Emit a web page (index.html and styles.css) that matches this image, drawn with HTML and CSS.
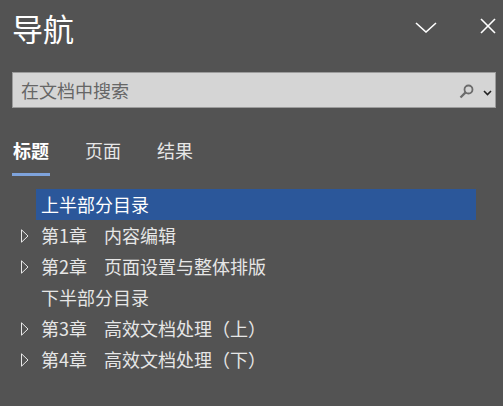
FILE: index.html
```html
<!DOCTYPE html>
<html lang="zh-CN">

<head>
    <meta charset="UTF-8" />
    <title>导航</title>
    <link rel="stylesheet" href="styles.css">
</head>

<body>
    <div class="pane">
        <div class="pane-header">
            <h1 class="pane-title">导航</h1>
            <button class="icon-btn btn-menu" type="button">
                <svg width="22" height="11" viewBox="0 0 22 11">
                    <polyline points="1,1 11,10 21,1" fill="none" stroke="#ffffff" stroke-width="1.6" />
                </svg>
            </button>
            <button class="icon-btn btn-close" type="button">
                <svg width="16" height="16" viewBox="0 0 16 16">
                    <line x1="1" y1="1" x2="15" y2="15" stroke="#ffffff" stroke-width="1.6" />
                    <line x1="15" y1="1" x2="1" y2="15" stroke="#ffffff" stroke-width="1.6" />
                </svg>
            </button>
        </div>

        <div class="search-box">
            <span class="search-text">在文档中搜索</span>
            <svg class="search-icon" width="15" height="15" viewBox="0 0 15 15">
                <circle cx="9.5" cy="5.5" r="4" fill="none" stroke="#6b6b6b" stroke-width="1.8" />
                <line x1="6.6" y1="8.4" x2="1.5" y2="13.5" stroke="#6b6b6b" stroke-width="2.2" />
            </svg>
            <svg class="search-drop" width="9" height="6" viewBox="0 0 9 6">
                <polyline points="1,1 4.5,4.5 8,1" fill="none" stroke="#222222" stroke-width="1.6" />
            </svg>
        </div>

        <div class="tabs">
            <div class="tab active">标题</div>
            <div class="tab">页面</div>
            <div class="tab">结果</div>
        </div>

        <ul class="tree">
            <li class="tree-row">
                <span class="toggle"></span>
                <span class="label selected">上半部分目录</span>
            </li>
            <li class="tree-row">
                <span class="toggle"><svg width="8" height="14" viewBox="0 0 8 14"><polygon points="0.5,0.8 7,7 0.5,13.2" fill="none" stroke="#e8e8e8" stroke-width="1" /></svg></span>
                <span class="label"><span class="num">第1章</span>内容编辑</span>
            </li>
            <li class="tree-row">
                <span class="toggle"><svg width="8" height="14" viewBox="0 0 8 14"><polygon points="0.5,0.8 7,7 0.5,13.2" fill="none" stroke="#e8e8e8" stroke-width="1" /></svg></span>
                <span class="label"><span class="num">第2章</span>页面设置与整体排版</span>
            </li>
            <li class="tree-row">
                <span class="toggle"></span>
                <span class="label">下半部分目录</span>
            </li>
            <li class="tree-row">
                <span class="toggle"><svg width="8" height="14" viewBox="0 0 8 14"><polygon points="0.5,0.8 7,7 0.5,13.2" fill="none" stroke="#e8e8e8" stroke-width="1" /></svg></span>
                <span class="label"><span class="num">第3章</span>高效文档处理（上）</span>
            </li>
            <li class="tree-row">
                <span class="toggle"><svg width="8" height="14" viewBox="0 0 8 14"><polygon points="0.5,0.8 7,7 0.5,13.2" fill="none" stroke="#e8e8e8" stroke-width="1" /></svg></span>
                <span class="label"><span class="num">第4章</span>高效文档处理（下）</span>
            </li>
        </ul>
    </div>
</body>

</html>
```

FILE: styles.css
```css
html,
body {
    margin: 0;
    padding: 0;
    background-color: #535353;
}

body {
    font-family: "Noto Sans CJK SC", "Noto Sans", sans-serif;
    color: #e6e6e6;
}

.pane {
    width: 503px;
    height: 406px;
    overflow: hidden;
}

.pane-header {
    display: flex;
    align-items: center;
    height: 56px;
    padding: 0 7px 0 12px;
}

.pane-title {
    margin: 0;
    font-size: 31px;
    font-weight: normal;
    line-height: 36px;
    color: #ffffff;
}

.icon-btn {
    display: flex;
    padding: 0;
    border: none;
    background: none;
}

.btn-menu {
    margin-left: auto;
    margin-top: -2px;
}

.btn-close {
    margin-left: 43px;
    margin-top: -4px;
}

.search-box {
    display: flex;
    align-items: center;
    box-sizing: border-box;
    height: 36px;
    margin: 16px 7px 0 12px;
    padding: 0 3px 0 8px;
    background-color: #d5d5d5;
    border: 1px solid #9c9c9c;
}

.search-text {
    flex: 1;
    font-size: 18px;
    color: #666666;
}

.search-icon {
    margin-top: 2px;
}

.search-drop {
    margin-left: 9px;
    margin-top: 5px;
}

.tabs {
    display: flex;
    gap: 34px;
    margin: 30px 0 0 12px;
}

.tab {
    width: 38px;
    text-align: center;
    font-size: 18px;
    line-height: 24px;
    padding-bottom: 11px;
    border-bottom: 3px solid transparent;
    color: #e6e6e6;
}

.tab.active {
    font-weight: bold;
    color: #ffffff;
    border-bottom-color: #7ea3dc;
}

.tree {
    list-style: none;
    margin: 13px 27px 0 21px;
    padding: 0;
}

.tree-row {
    display: flex;
    height: 31px;
}

.toggle {
    display: flex;
    align-items: center;
    width: 15px;
    margin-top: 1px;
}

.label {
    flex: 1;
    padding-left: 5px;
    font-size: 18px;
    line-height: 31px;
    white-space: nowrap;
}

.label.selected {
    background-color: #2b579a;
    color: #ffffff;
}

.num {
    margin-right: 17px;
}
```
